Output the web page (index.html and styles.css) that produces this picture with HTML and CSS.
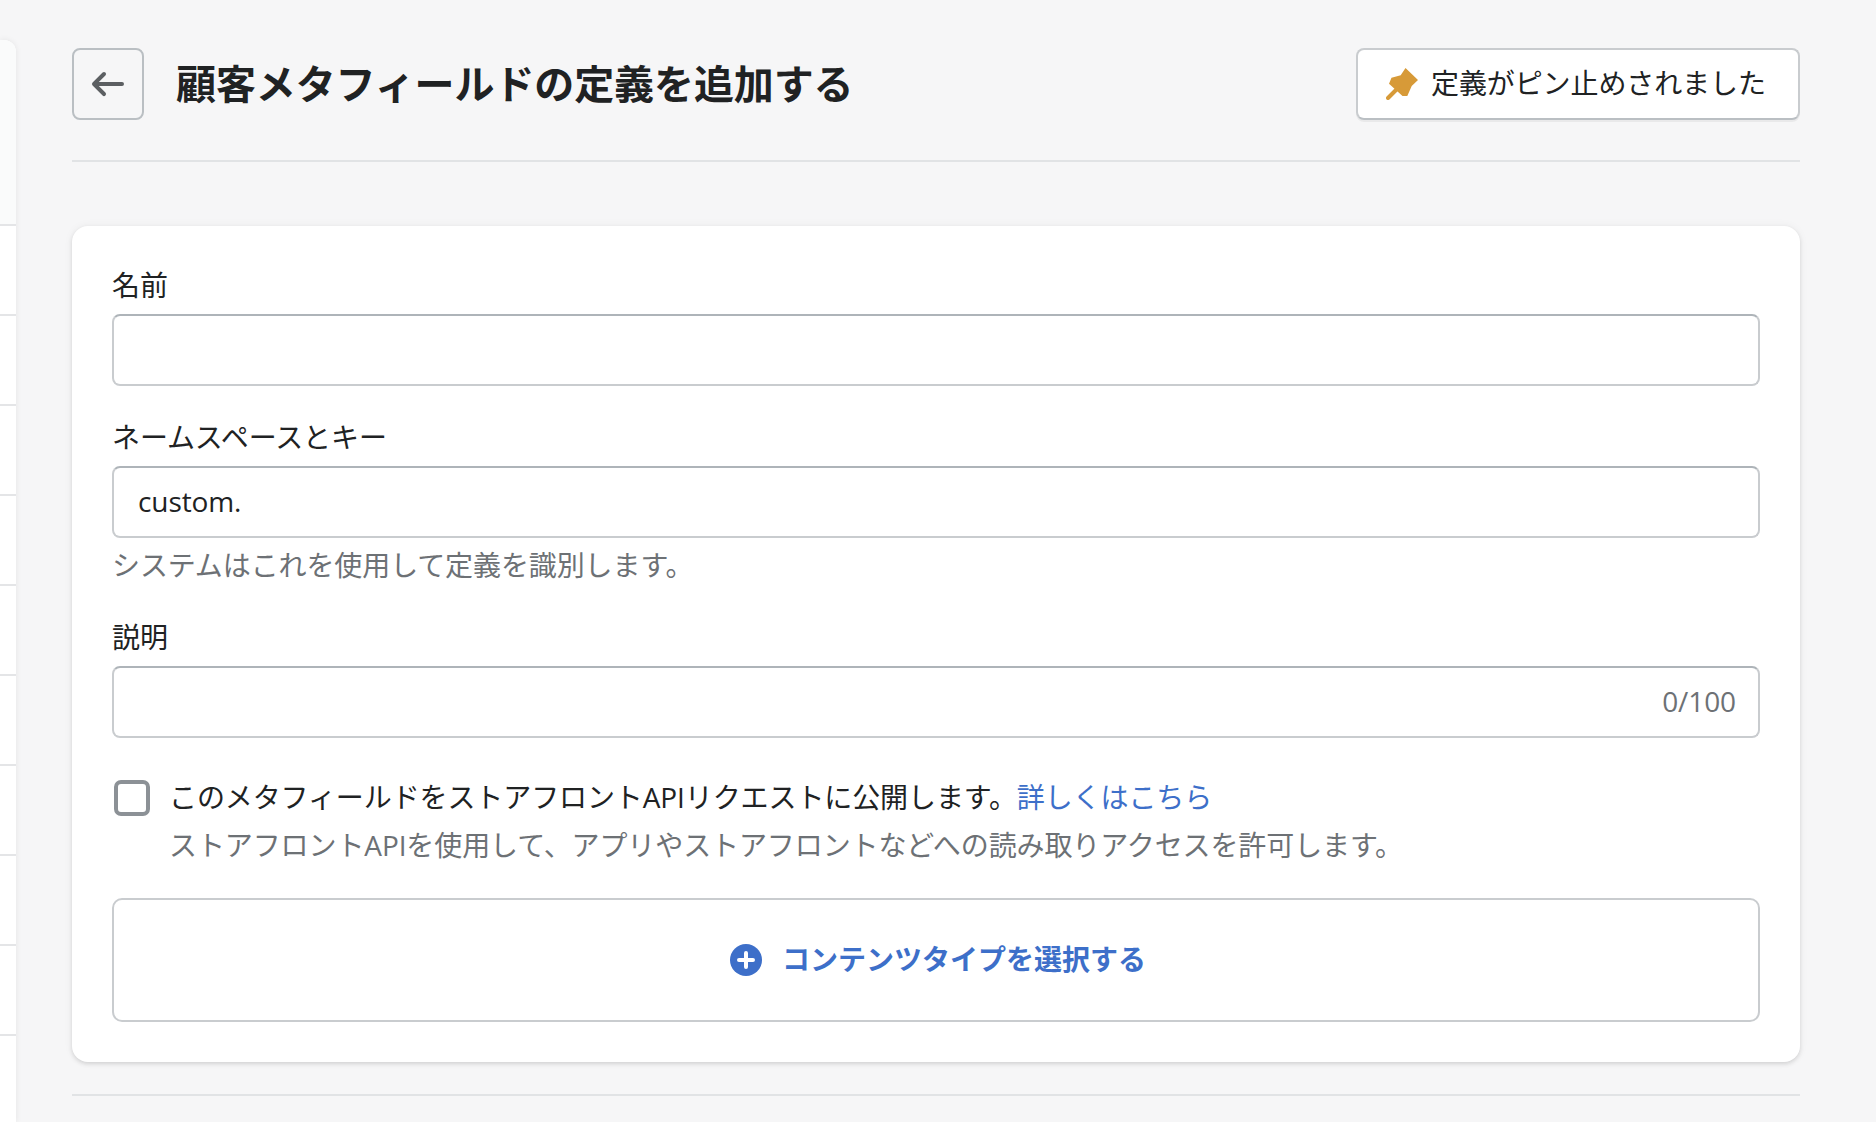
FILE: index.html
```html
<!DOCTYPE html>
<html lang="ja">
<head>
<meta charset="utf-8">
<title>顧客メタフィールドの定義を追加する</title>
<link rel="stylesheet" href="styles.css">
</head>
<body>
<div class="shell">
  <aside class="sidebar">
    <div class="side-head"></div>
    <div class="side-row"></div>
    <div class="side-row"></div>
    <div class="side-row"></div>
    <div class="side-row"></div>
    <div class="side-row"></div>
    <div class="side-row"></div>
    <div class="side-row"></div>
    <div class="side-row"></div>
    <div class="side-row"></div>
    <div class="side-row"></div>
  </aside>
  <main class="main">
    <header class="page-header">
      <button class="back-btn" type="button" aria-label="戻る">
        <svg class="back-icon" viewBox="0 0 20 20"><path d="M17 9H5.414l3.293-3.293a.999.999 0 1 0-1.414-1.414l-5 5a.999.999 0 0 0 0 1.414l5 5a.997.997 0 0 0 1.414 0 .999.999 0 0 0 0-1.414L5.414 11H17a1 1 0 1 0 0-2z"/></svg>
      </button>
      <h1 class="title">顧客メタフィールドの定義を追加する</h1>
      <button class="pin-btn" type="button">
        <svg class="pin-icon" viewBox="0 0 32 32"><path class="pin-head" d="M19.5 0L32 12l-6.3 6-4.4 10h-4.800L3 15.700l2.500-6 9.200-2.400z"/><path class="pin-needle" d="M2 30l10-10"/></svg>
        <span class="pin-label">定義がピン止めされました</span>
      </button>
    </header>
    <section class="card">
      <div class="field">
        <label class="label">名前</label>
        <div class="input-box"><input class="input" type="text"></div>
      </div>
      <div class="field">
        <label class="label">ネームスペースとキー</label>
        <div class="input-box"><input class="input" type="text" value="custom."></div>
        <p class="hint">システムはこれを使用して定義を識別します。</p>
      </div>
      <div class="field">
        <label class="label">説明</label>
        <div class="input-box input-box-count"><input class="input" type="text"><span class="count">0/100</span></div>
      </div>
      <div class="check-row">
        <span class="checkbox"></span>
        <div class="check-text">
          <div class="check-line">このメタフィールドをストアフロントAPIリクエストに公開します。<a class="link" href="#">詳しくはこちら</a></div>
          <div class="check-help">ストアフロントAPIを使用して、アプリやストアフロントなどへの読み取りアクセスを許可します。</div>
        </div>
      </div>
      <button class="type-btn" type="button">
        <svg class="plus-icon" viewBox="0 0 32 32"><circle class="plus-bg" cx="16" cy="16" r="16"/><path class="plus-mark" d="M16 9v14M9 16h14"/></svg>
        <span class="type-label">コンテンツタイプを選択する</span>
      </button>
    </section>
    <hr class="rule">
  </main>
</div>
</body>
</html>
```
FILE: styles.css
```css
* { box-sizing: border-box; }
html, body { margin: 0; height: 100%; }
body {
  background: #f6f6f7;
  color: #202223;
  font-family: "Open Sans", "Noto Sans CJK JP", sans-serif;
  font-size: 28px;
  font-weight: 400;
  line-height: 38px;
  letter-spacing: -0.1px;
  overflow: hidden;
}
button, input { font: inherit; color: inherit; letter-spacing: inherit; }
.shell { display: flex; align-items: flex-start; height: 1122px; }

.sidebar {
  flex: 0 0 16px;
  margin-top: 40px;
  height: 1082px;
  background: #fff;
  border-top-right-radius: 12px;
  box-shadow: 0 0 6px rgba(23, 24, 24, .08);
  overflow: hidden;
}
.side-head { height: 186px; background: #fafbfb; border-bottom: 2px solid #e4e5e7; }
.side-row { height: 90px; border-bottom: 2px solid #e4e5e7; }

.main { flex: 1; padding: 48px 76px 0 56px; }

.page-header {
  display: flex;
  align-items: center;
  gap: 32px;
  padding-bottom: 40px;
  border-bottom: 2px solid #e1e3e5;
}
.back-btn {
  flex: 0 0 72px;
  height: 72px;
  display: flex;
  align-items: center;
  justify-content: center;
  padding: 0;
  background: transparent;
  border: 2px solid #babfc3;
  border-radius: 8px;
}
.back-icon { width: 40px; height: 40px; fill: #5c5f62; }
.title { flex: 1; margin: 0; font-size: 40px; line-height: 56px; font-weight: 600; }
.pin-btn {
  flex: none;
  display: flex;
  align-items: center;
  gap: 13px;
  height: 72px;
  width: 444px;
  padding: 0 26px 0 28px;
  background: #fff;
  border: 2px solid #c9cccf;
  border-bottom-color: #babfc3;
  border-radius: 8px;
  box-shadow: 0 2px 0 rgba(0, 0, 0, .05);
}
.pin-label { white-space: nowrap; padding-bottom: 2px; }
.pin-icon { flex: none; width: 32px; height: 32px; }
.pin-head { fill: #d79a38; }
.pin-needle { fill: none; stroke: #d79a38; stroke-width: 4; stroke-linecap: round; }

.card {
  margin-top: 64px;
  padding: 40px;
  background: #fff;
  border-radius: 16px;
  box-shadow: 0 0 10px rgba(23, 24, 24, .05), 0 2px 4px rgba(0, 0, 0, .12);
}
.field { margin-bottom: 32px; }
.field:nth-child(3) { margin-bottom: 40px; }
.label { display: block; margin-bottom: 10px; }
.input-box {
  display: flex;
  align-items: center;
  height: 72px;
  padding: 0 24px 2px;
  background: #fff;
  border: 2px solid #c9cccf;
  border-top-color: #aeb4b9;
  border-radius: 8px;
}
.input-box-count { padding-right: 22px; }
.input {
  flex: 1;
  min-width: 0;
  padding: 0;
  border: 0;
  outline: 0;
  background: transparent;
}
.count { color: #6d7175; }
.hint { margin: 8px 0 0; padding-bottom: 2px; color: #6d7175; }

.check-row { display: flex; gap: 19px; padding-left: 2px; }
.checkbox {
  flex: none;
  width: 36px;
  height: 36px;
  margin-top: 2px;
  border: 4px solid #8c9196;
  border-radius: 7px;
}
.check-line { padding-bottom: 2px; }
.check-help { margin-top: 8px; padding-bottom: 2px; color: #6d7175; }
.link { color: #3d6fc9; text-decoration: none; }

.type-btn {
  display: flex;
  align-items: center;
  justify-content: center;
  gap: 20px;
  width: 100%;
  height: 124px;
  margin-top: 32px;
  padding: 0 0 0 4px;
  background: #fff;
  border: 2px solid #c9cccf;
  border-radius: 10px;
  color: #3d6fc9;
  font-weight: 600;
  letter-spacing: 0;
}
.type-label { padding-bottom: 2px; }
.plus-icon { flex: none; width: 32px; height: 32px; }
.plus-bg { fill: #3d6fc9; }
.plus-mark { fill: none; stroke: #fff; stroke-width: 4; stroke-linecap: round; }

.rule { margin: 32px 0 0; border: 0; border-top: 2px solid #e1e3e5; }
```
